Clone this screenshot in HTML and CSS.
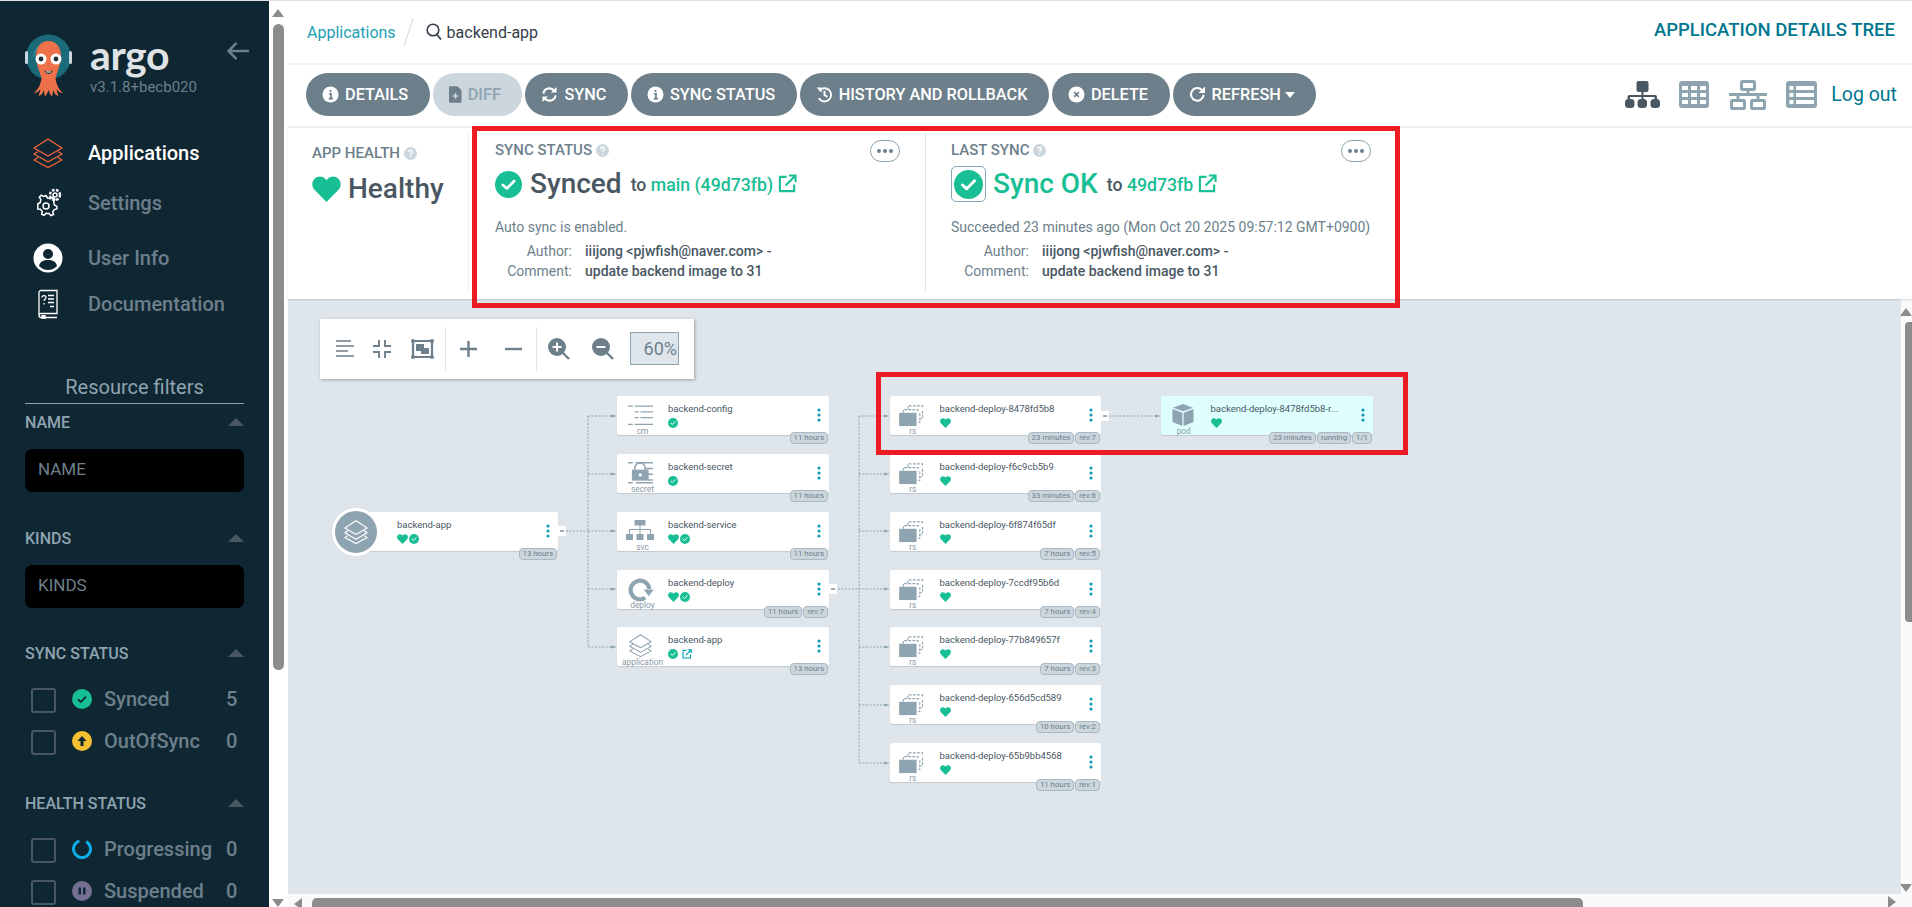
FILE: index.html
```html
<!DOCTYPE html>
<html lang="en">
<head>
<meta charset="utf-8">
<title>backend-app - Argo CD</title>
<link rel="stylesheet" href="styles.css">
</head>
<body>
<svg class="defs" width="0" height="0" aria-hidden="true">
  <defs>
    <symbol id="i-layers" viewBox="0 0 30 30"><g fill="none" stroke="currentColor" stroke-width="1.4" stroke-linejoin="round"><path d="M15 1 29 10 15 18 1 10Z"/><path d="M5 13.5 1 16 15 24 29 16 25 13.5"/><path d="M5 19.5 1 22 15 29.5 29 22 25 19.5"/></g></symbol>
    <symbol id="i-check" viewBox="0 0 20 20"><circle cx="10" cy="10" r="10" fill="#18be94"/><path d="M5.8 10.3 8.8 13 14.2 7.4" fill="none" stroke="#fff" stroke-width="2" stroke-linecap="round" stroke-linejoin="round"/></symbol>
    <symbol id="i-heart" viewBox="0 0 24 22"><path d="M12 22 1.8 11.6C-.6 9-.6 4.9 1.9 2.4 4.4-.1 8.4-.1 10.9 2.4L12 3.5l1.1-1.1c2.5-2.5 6.5-2.5 9 0 2.5 2.5 2.5 6.6.1 9.2Z" fill="#18be94"/></symbol>
    <symbol id="i-ext" viewBox="0 0 20 20"><g fill="none" stroke="currentColor" stroke-width="2.2"><path d="M9 3H2v15h15v-7"/><path d="M8 12 18 2M11.500 1.500H18.500V8.500"/></g></symbol>
    <symbol id="i-info" viewBox="0 0 18 18"><circle cx="9" cy="9" r="8.500" fill="#fff"/><path d="M9 4.200v2.200M7.400 8.200H9.500V13M7.200 13.300h4.400" stroke="#6d7f8b" stroke-width="1.800" fill="none"/></symbol>
    <symbol id="i-q" viewBox="0 0 14 14"><circle cx="7" cy="7" r="7" fill="#ccd6dd"/><path d="M5 5.300C5 3 9 3 9 5.300 9 6.700 7 6.600 7 8.200M7 9.600v1.400" stroke="#fff" stroke-width="1.500" fill="none"/></symbol>
    <symbol id="i-dots" viewBox="0 0 4 14"><circle cx="2" cy="2" r="1.600"/><circle cx="2" cy="7" r="1.600"/><circle cx="2" cy="12" r="1.600"/></symbol>
    <symbol id="i-cm" viewBox="0 0 26 22"><path d="M0 1h5v1.500H0zM7 1h19v1.500H7zM7 7h4v1.500H7zM13 7h13v1.500H13zM7 13h4v1.500H7zM13 13h13v1.500H13zM0 20h5v1.500H0zM7 20h19v1.500H7z" fill="#8fa4b1"/></symbol>
    <symbol id="i-secret" viewBox="0 0 26 24"><path d="M0 1h5v1.500H0zM8 1h18v1.500H8zM17 7h9v1.500H17zM21 13h5v1.500H21zM21 19h5v1.500H21zM0 22h5v1.500H0zM8 22h18v1.500H8z" fill="#8fa4b1"/><path d="M7 9V7.500a5.500 5.500 0 0 1 11 0V9" fill="none" stroke="#8fa4b1" stroke-width="1.600"/><path d="M4 9h17.500v11.500H4z" fill="#8fa4b1"/><circle cx="12.800" cy="14.500" r="1.600" fill="#fff"/></symbol>
    <symbol id="i-svc" viewBox="0 0 28 22"><path d="M8.500 0h11v5.500h-11zM13.500 5.500h1V9h10.500v5h-1v-4H14.500v4h-1v-4H4v4H3V9h10.500zM0 14h7v6H0zM10.500 14h7v6h-7zM21 14h7v6h-7z" fill="#8fa4b1"/></symbol>
    <symbol id="i-deploy" viewBox="0 0 24 24"><path d="M20.500 10.500A9 9 0 1 0 16.500 19" fill="none" stroke="#8fa4b1" stroke-width="4"/><path d="M15 11H24.500L20 17.500Z" fill="#8fa4b1"/></symbol>
    <symbol id="i-rs" viewBox="0 0 28 24"><path d="M9.500 4.500V1h16v3M25.500 6.500V15H23" fill="none" stroke="#8fa4b1" stroke-width="1.200" stroke-dasharray="3 1.500"/><path d="M4.500 8.500V5h16v3M22.500 9v10H21" fill="none" stroke="#8fa4b1" stroke-width="1.200" stroke-dasharray="3 1.500"/><path d="M0 8.500h19V23H0z" fill="#8fa4b1"/></symbol>
    <symbol id="i-pod" viewBox="0 0 24 24"><path d="M12 0 23 4 12 8 1 4Z" fill="#8fa4b1"/><path d="M.500 5.500 11.300 9.500V24L.500 19.500ZM23.500 5.500 12.700 9.500V24L23.500 19.500Z" fill="#8fa4b1"/></symbol>
    <symbol id="i-minus" viewBox="0 0 8 10"><path d="M2 5h4" stroke="#495763" stroke-width="1"/></symbol>
  </defs>
</svg>

<div class="app">
  <aside class="sidebar">
    <div class="brand">
      <svg class="octopus" viewBox="24 32 50 66" aria-hidden="true">
        <circle cx="48.500" cy="57" r="22.500" fill="#1a6a7a"/>
        <path d="M34 57c0-6 3-11 8-13" fill="none" stroke="#5d9aa6" stroke-width=".8"/>
        <rect x="25" y="51" width="3" height="13" rx="1.500" fill="#c9d6dc"/>
        <rect x="69" y="51" width="3" height="13" rx="1.500" fill="#c9d6dc"/>
        <path d="M48.500 41C40 41 36 48 36 56C36 64 40 72 41.500 78C41 84 38 90 34 93C37 93 39 91 40.500 89C40 91 39.500 94 38.500 96C41 95.500 43 93 44 90C44 92 44.500 95 45 96.500C46.500 95 47.500 93 48.500 90C49.500 93 50.500 95 52 96.500C52.500 95 53 92 53 90C54 93 56 95.500 58.500 96C57.500 94 57 91 56.500 89C58 91 60 93 63 93C59 90 56 84 55.500 78C57 72 61 64 61 56C61 48 57 41 48.500 41Z" fill="#ee7249"/>
        <circle cx="41" cy="59" r="5.500" fill="#fff"/><circle cx="56" cy="59" r="5.500" fill="#fff"/>
        <circle cx="41" cy="59" r="2.400" fill="#20323c"/><circle cx="56" cy="59" r="2.400" fill="#20323c"/>
        <path d="M44.500 70.500c2.500 1 5.500 1 8 0-.5 4.500-7.500 4.500-8 0Z" fill="#20323c"/>
        <path d="M46 71.200c1.500.3 3.500.3 5 0l-.4 1.200h-4.200Z" fill="#fff"/>
      </svg>
      <div class="brand-text">
        <div class="wordmark">argo</div>
        <div class="version">v3.1.8+becb020</div>
      </div>
      <svg class="collapse-arrow" viewBox="0 0 24 20" aria-hidden="true"><path d="M23 10H2M10 1.500 1.500 10 10 18.500" fill="none" stroke="currentColor" stroke-width="2.600"/></svg>
    </div>
    <nav class="nav">
      <div class="nav-item nav-active">
        <svg class="nav-icon icon-orange" aria-hidden="true"><use href="#i-layers"/></svg><span>Applications</span>
      </div>
      <div class="nav-item nav-settings">
        <svg class="nav-icon" viewBox="0 0 30 30" aria-hidden="true"><g fill="none" stroke="#fff" stroke-width="1.500"><circle cx="13" cy="18" r="3"/><path d="M13 9.500l1.500 2.500 3 .7 2.500-1.300 2 2-1.300 2.500.7 3 2.500 1.500v2.500l-2.700.7-1.500 2.500.8 2.400-2.600 1-1.900-2-2.900-.2-2 2-2.400-1 .6-2.700-1.800-2.300-2.700-.2V18l2.500-1.500.5-3-1.500-2.300 2-2 2.500 1.200Z" transform="translate(0 -2)"/><circle cx="22" cy="7" r="2"/><circle cx="22" cy="7" r="5" stroke-dasharray="2.500 1.500" stroke-width="2.500"/></g></svg><span>Settings</span>
      </div>
      <div class="nav-item nav-user">
        <svg class="nav-icon" viewBox="0 0 30 30" aria-hidden="true"><circle cx="15" cy="15" r="14.500" fill="#fff"/><circle cx="15" cy="11" r="5" fill="#0f2733"/><path d="M6 23c1-5 5-6 9-6s8 1 9 6c-2.500 2.500-5.500 4-9 4s-6.500-1.500-9-4Z" fill="#0f2733"/></svg><span>User Info</span>
      </div>
      <div class="nav-item nav-doc">
        <svg class="nav-icon" viewBox="0 0 30 30" aria-hidden="true"><g fill="none" stroke="#fff" stroke-width="1.300"><path d="M6 26V3.500A2 2 0 0 1 8 1.500h16v23H8a2 2 0 0 0-2 2 2 2 0 0 0 2 2h16"/><path d="M9 8.500c0-2.500 4-2.500 4 0 0 1.500-2 1.500-2 3.500M11 14v1.500M15 6.500h6M15 10h6M15 13.500h6M17 17.500h4"/><path d="M9 26v3.500l1.500-1 1.500 1V26" fill="#fff"/></g></svg><span>Documentation</span>
      </div>
    </nav>

    <div class="filters-title">Resource filters</div>
    <section class="filter filter-field">
      <div class="filter-head"><span>NAME</span><i class="caret"></i></div>
      <div class="filter-input">NAME</div>
    </section>
    <section class="filter filter-field">
      <div class="filter-head"><span>KINDS</span><i class="caret"></i></div>
      <div class="filter-input">KINDS</div>
    </section>
    <section class="filter filter-checks">
      <div class="filter-head"><span>SYNC STATUS</span><i class="caret"></i></div>
      <div class="check-row"><i class="box"></i><svg class="status-icon" viewBox="0 0 20 20" aria-hidden="true"><circle cx="10" cy="10" r="10" fill="#18be94"/><path d="M6 10.300 8.800 13 14 7.600" fill="none" stroke="#0f2733" stroke-width="1.800"/></svg><span class="check-label">Synced</span><span class="check-count">5</span></div>
      <div class="check-row"><i class="box"></i><svg class="status-icon" viewBox="0 0 20 20" aria-hidden="true"><circle cx="10" cy="10" r="10" fill="#f4c030"/><path d="M10 5 14.500 10H11.500V15H8.500V10H5.500Z" fill="#0f2733"/></svg><span class="check-label">OutOfSync</span><span class="check-count">0</span></div>
    </section>
    <section class="filter filter-checks">
      <div class="filter-head"><span>HEALTH STATUS</span><i class="caret"></i></div>
      <div class="check-row"><i class="box"></i><svg class="status-icon" viewBox="0 0 20 20" aria-hidden="true"><circle cx="10" cy="10" r="8.500" fill="none" stroke="#0dadea" stroke-width="3" stroke-dasharray="46 7.500" transform="rotate(-60 10 10)"/></svg><span class="check-label">Progressing</span><span class="check-count">0</span></div>
      <div class="check-row"><i class="box"></i><svg class="status-icon" viewBox="0 0 20 20" aria-hidden="true"><circle cx="10" cy="10" r="10" fill="#766f94"/><path d="M6.500 6.500h2.500v7H6.500zM11 6.500h2.500v7H11z" fill="#0f2733"/></svg><span class="check-label">Suspended</span><span class="check-count">0</span></div>
    </section>
  </aside>

  <div class="v-scroll">
    <i class="arrow-up"></i>
    <div class="v-thumb"></div>
    <i class="arrow-down"></i>
  </div>

  <main class="main">
    <header class="topbar">
      <div class="crumbs">
        <a class="crumb-link">Applications</a>
        <i class="crumb-slash"></i>
        <svg class="search-icon" viewBox="0 0 16 18" aria-hidden="true"><circle cx="7" cy="7" r="5.800" fill="none" stroke="#363c4a" stroke-width="1.600"/><path d="M10.800 11.500 15 16.500" stroke="#363c4a" stroke-width="1.800"/></svg>
        <span class="crumb-current">backend-app</span>
      </div>
      <div class="page-title">APPLICATION DETAILS TREE</div>
    </header>

    <div class="toolbar">
      <div class="actions">
        <button class="btn"><svg class="btn-icon" aria-hidden="true"><use href="#i-info"/></svg>DETAILS</button>
        <button class="btn btn-disabled"><svg class="btn-icon btn-icon-file" viewBox="0 0 14 18" aria-hidden="true"><path d="M1 0h8l4.500 4.500V17a1 1 0 0 1-1 1H1a1 1 0 0 1-1-1V1a1 1 0 0 1 1-1Z" fill="#6d7f8b"/><path d="M7 7.500v6M4 10.500h6" stroke="#ccd6dd" stroke-width="1.600"/></svg>DIFF</button>
        <button class="btn"><svg class="btn-icon" viewBox="0 0 18 18" aria-hidden="true"><g fill="none" stroke="#fff" stroke-width="2.200"><path d="M2.500 8A6.500 6.500 0 0 1 14 5"/><path d="M15.500 10A6.500 6.500 0 0 1 4 13"/></g><path d="M16.500 1v6h-6ZM1.500 17v-6h6Z" fill="#fff"/></svg>SYNC</button>
        <button class="btn"><svg class="btn-icon" aria-hidden="true"><use href="#i-info"/></svg>SYNC STATUS</button>
        <button class="btn"><svg class="btn-icon" viewBox="0 0 18 18" aria-hidden="true"><g fill="none" stroke="#fff" stroke-width="2"><path d="M3.500 5A7 7 0 1 1 3 13"/><path d="M9 5v4.500l3 2"/></g><path d="M.500 1.500h5.500v5.500Z" fill="#fff"/></svg>HISTORY AND ROLLBACK</button>
        <button class="btn"><svg class="btn-icon" viewBox="0 0 18 18" aria-hidden="true"><circle cx="9" cy="9" r="8.500" fill="#fff"/><path d="M6.500 6.500l5 5M11.500 6.500l-5 5" stroke="#6d7f8b" stroke-width="1.600"/></svg>DELETE</button>
        <button class="btn"><svg class="btn-icon" viewBox="0 0 18 18" aria-hidden="true"><path d="M15.500 9.500A6.700 6.700 0 1 1 13.500 4" fill="none" stroke="#fff" stroke-width="2.200"/><path d="M17 .500v7h-7Z" fill="#fff"/></svg>REFRESH<i class="btn-caret"></i></button>
      </div>
      <div class="view-tools">
        <svg class="view-icon view-tree" viewBox="0 0 35 27" aria-hidden="true"><path d="M13.500 0h8a2 2 0 0 1 2 2v7a2 2 0 0 1-2 2h-3v3h11.500a2 2 0 0 1 2 2v2.500h-2.500V16H18.500v2.500h-2V16H5v2.500H2.500V16a2 2 0 0 1 2-2h12v-3h-3a2 2 0 0 1-2-2V2a2 2 0 0 1 2-2Z" fill="#495763"/><rect x="0" y="18" width="9.500" height="9" rx="3.500" fill="#495763"/><rect x="12.500" y="18" width="9.500" height="9" rx="3.500" fill="#495763"/><rect x="25.500" y="18" width="9.500" height="9" rx="3.500" fill="#495763"/></svg>
        <svg class="view-icon view-grid" viewBox="0 0 30 27" aria-hidden="true"><rect width="30" height="27" rx="3" fill="#8fa4b1"/><path d="M3 5h6v4H3zM12 5h6v4H12zM21 5h6v4H21zM3 12h6v4H3zM12 12h6v4H12zM21 12h6v4H21zM3 19h6v4H3zM12 19h6v4H12zM21 19h6v4H21z" fill="#fff"/></svg>
        <svg class="view-icon view-net" viewBox="0 0 38 30" aria-hidden="true"><g fill="none" stroke="#8fa4b1" stroke-width="3"><rect x="12.500" y="1.500" width="13" height="8" rx="1"/><rect x="2.500" y="20.500" width="13" height="8" rx="1"/><rect x="22.500" y="20.500" width="13" height="8" rx="1"/><path d="M0 14.500h38M19 10v4.500M9 15v5M29 15v5"/></g></svg>
        <svg class="view-icon view-list" viewBox="0 0 31 27" aria-hidden="true"><rect width="31" height="27" rx="3" fill="#8fa4b1"/><path d="M3.500 5h4v4h-4zM10 5h18v4H10zM3.500 12h4v4h-4zM10 12h18v4H10zM3.500 19h4v4h-4zM10 19h18v4H10z" fill="#fff"/></svg>
        <a class="logout">Log out</a>
      </div>
    </div>

    <section class="status-panel">
      <div class="status-item status-health">
        <div class="status-label">APP HEALTH<svg class="q" aria-hidden="true"><use href="#i-q"/></svg></div>
        <div class="status-value"><svg class="big-heart" aria-hidden="true"><use href="#i-heart"/></svg><span class="value-text">Healthy</span></div>
      </div>
      <div class="status-item status-sync">
        <div class="status-label">SYNC STATUS<svg class="q" aria-hidden="true"><use href="#i-q"/></svg><span class="more"><i></i><i></i><i></i></span></div>
        <div class="status-value"><svg class="big-check" aria-hidden="true"><use href="#i-check"/></svg><span class="value-text">Synced</span><span class="value-to">to <a class="green">main (49d73fb)</a></span><svg class="ext" aria-hidden="true"><use href="#i-ext"/></svg></div>
        <div class="status-line">Auto sync is enabled.</div>
        <dl class="meta">
          <dt>Author:</dt><dd>iiijong &lt;pjwfish@naver.com&gt; -</dd>
          <dt>Comment:</dt><dd>update backend image to 31</dd>
        </dl>
      </div>
      <div class="status-item status-last">
        <div class="status-label">LAST SYNC<svg class="q" aria-hidden="true"><use href="#i-q"/></svg><span class="more"><i></i><i></i><i></i></span></div>
        <div class="status-value"><span class="check-frame"><svg class="big-check" aria-hidden="true"><use href="#i-check"/></svg></span><span class="value-text green">Sync OK</span><span class="value-to">to <a class="green">49d73fb</a></span><svg class="ext" aria-hidden="true"><use href="#i-ext"/></svg></div>
        <div class="status-line">Succeeded 23 minutes ago (Mon Oct 20 2025 09:57:12 GMT+0900)</div>
        <dl class="meta">
          <dt>Author:</dt><dd>iiijong &lt;pjwfish@naver.com&gt; -</dd>
          <dt>Comment:</dt><dd>update backend image to 31</dd>
        </dl>
      </div>
    </section>

    <div class="graph-row">
      <section class="graph">
        <div class="graph-tools">
          <svg class="gt gt-align" viewBox="0 0 18 18" aria-hidden="true"><path d="M0 1h15M0 6h18M0 11h12M0 16h18" stroke="#6d7f8b" stroke-width="1.700"/></svg>
          <svg class="gt gt-compress" viewBox="0 0 18 18" aria-hidden="true"><path d="M6 0v6H0M12 0v6h6M6 18v-6H0M12 18v-6h6" fill="none" stroke="#6d7f8b" stroke-width="1.900"/></svg>
          <svg class="gt gt-fit" viewBox="0 0 23 20" aria-hidden="true"><path d="M2 2h19v16H2Z" fill="none" stroke="#6d7f8b" stroke-width="2.200"/><rect x="5" y="5" width="8" height="7" fill="#6d7f8b"/><rect x="10" y="9" width="8" height="6" rx="1" fill="#6d7f8b"/><circle cx="2" cy="2" r="2" fill="#6d7f8b"/><circle cx="21" cy="2" r="2" fill="#6d7f8b"/><circle cx="2" cy="18" r="2" fill="#6d7f8b"/><circle cx="21" cy="18" r="2" fill="#6d7f8b"/></svg>
          <i class="gt-sep"></i>
          <svg class="gt gt-plus" viewBox="0 0 18 18" aria-hidden="true"><path d="M0 9h17M8.500 1v16" stroke="#6d7f8b" stroke-width="2.400"/></svg>
          <svg class="gt gt-minus" viewBox="0 0 18 18" aria-hidden="true"><path d="M0 9h17" stroke="#6d7f8b" stroke-width="2.400"/></svg>
          <i class="gt-sep"></i>
          <svg class="gt gt-zoom" viewBox="0 0 22 22" aria-hidden="true"><circle cx="9" cy="9" r="9" fill="#6d7f8b"/><path d="M14.500 14.500 21 21" stroke="#6d7f8b" stroke-width="2.400"/><path d="M4.500 9h9M9 4.500v9" stroke="#fff" stroke-width="2"/></svg>
          <svg class="gt gt-zoom" viewBox="0 0 22 22" aria-hidden="true"><circle cx="9" cy="9" r="9" fill="#6d7f8b"/><path d="M14.500 14.500 21 21" stroke="#6d7f8b" stroke-width="2.400"/><path d="M4.500 9h9" stroke="#fff" stroke-width="2"/></svg>
          <div class="zoom-input">60%</div>
        </div>

        <svg class="edges" width="1613" height="595" viewBox="288 299 1613 595" aria-hidden="true">
          <g fill="none" stroke="#8fa4b1" stroke-width="1" stroke-dasharray="2 1.500">
            <path d="M566 531H588M588 416V647M588 416H614M588 474H614M588 531H614M588 589H614M588 647H614"/>
            <path d="M838 589H859M859 416V763M859 416H887M859 474H887M859 531H887M859 589H887M859 647H887M859 705H887M859 763H887"/>
            <path d="M1109 416H1158"/>
          </g>
          <path d="M611 414.500 617 416 611 417.500ZM611 472.500 617 474 611 475.500ZM611 529.500 617 531 611 532.500ZM611 587.500 617 589 611 590.500ZM611 645.500 617 647 611 648.500ZM884 414.500 890 416 884 417.500ZM884 472.500 890 474 884 475.500ZM884 529.500 890 531 884 532.500ZM884 587.500 890 589 884 590.500ZM884 645.500 890 647 884 648.500ZM884 703.500 890 705 884 706.500ZM884 761.500 890 763 884 764.500ZM1155 414.500 1161 416 1155 417.500Z" fill="#8fa4b1"/>
        </svg>

        <div class="app-circle" style="left:44px;top:209px"><svg viewBox="0 0 30 30" aria-hidden="true"><use href="#i-layers"/></svg></div>
        <article class="node node-app" style="left:68px;top:213px">
          <div class="node-main"><div class="node-name">backend-app</div><div class="node-status"><svg class="h" aria-hidden="true"><use href="#i-heart"/></svg><svg aria-hidden="true"><use href="#i-check"/></svg></div></div>
          <svg class="node-dots" aria-hidden="true"><use href="#i-dots"/></svg>
          <div class="tags"><span>13 hours</span></div>
        </article>
        <span class="collapse" style="left:270px;top:227px"><svg aria-hidden="true"><use href="#i-minus"/></svg></span>

        <article class="node" style="left:329px;top:97px">
          <div class="node-kind"><svg class="k-cm" aria-hidden="true"><use href="#i-cm"/></svg><span>cm</span></div>
          <div class="node-main"><div class="node-name">backend-config</div><div class="node-status"><svg aria-hidden="true"><use href="#i-check"/></svg></div></div>
          <svg class="node-dots" aria-hidden="true"><use href="#i-dots"/></svg>
          <div class="tags"><span>11 hours</span></div>
        </article>
        <article class="node" style="left:329px;top:155px">
          <div class="node-kind"><svg class="k-secret" aria-hidden="true"><use href="#i-secret"/></svg><span>secret</span></div>
          <div class="node-main"><div class="node-name">backend-secret</div><div class="node-status"><svg aria-hidden="true"><use href="#i-check"/></svg></div></div>
          <svg class="node-dots" aria-hidden="true"><use href="#i-dots"/></svg>
          <div class="tags"><span>11 hours</span></div>
        </article>
        <article class="node" style="left:329px;top:213px">
          <div class="node-kind"><svg class="k-svc" aria-hidden="true"><use href="#i-svc"/></svg><span>svc</span></div>
          <div class="node-main"><div class="node-name">backend-service</div><div class="node-status"><svg class="h" aria-hidden="true"><use href="#i-heart"/></svg><svg aria-hidden="true"><use href="#i-check"/></svg></div></div>
          <svg class="node-dots" aria-hidden="true"><use href="#i-dots"/></svg>
          <div class="tags"><span>11 hours</span></div>
        </article>
        <article class="node" style="left:329px;top:271px">
          <div class="node-kind"><svg class="k-deploy" aria-hidden="true"><use href="#i-deploy"/></svg><span>deploy</span></div>
          <div class="node-main"><div class="node-name">backend-deploy</div><div class="node-status"><svg class="h" aria-hidden="true"><use href="#i-heart"/></svg><svg aria-hidden="true"><use href="#i-check"/></svg></div></div>
          <svg class="node-dots" aria-hidden="true"><use href="#i-dots"/></svg>
          <div class="tags"><span>11 hours</span><span>rev:7</span></div>
        </article>
        <span class="collapse" style="left:541px;top:285px"><svg aria-hidden="true"><use href="#i-minus"/></svg></span>
        <article class="node" style="left:329px;top:328px">
          <div class="node-kind"><svg class="k-app" aria-hidden="true"><use href="#i-layers"/></svg><span>application</span></div>
          <div class="node-main"><div class="node-name">backend-app</div><div class="node-status"><svg aria-hidden="true"><use href="#i-check"/></svg><svg class="node-ext" aria-hidden="true"><use href="#i-ext"/></svg></div></div>
          <svg class="node-dots" aria-hidden="true"><use href="#i-dots"/></svg>
          <div class="tags"><span>13 hours</span></div>
        </article>

        <article class="node node-rs" style="left:602px;top:97px">
          <div class="node-kind"><svg class="k-rs" aria-hidden="true"><use href="#i-rs"/></svg><span>rs</span></div>
          <div class="node-main"><div class="node-name">backend-deploy-8478fd5b8</div><div class="node-status"><svg class="h" aria-hidden="true"><use href="#i-heart"/></svg></div></div>
          <svg class="node-dots" aria-hidden="true"><use href="#i-dots"/></svg>
          <div class="tags"><span>23 minutes</span><span>rev:7</span></div>
        </article>
        <span class="collapse" style="left:813px;top:112px"><svg aria-hidden="true"><use href="#i-minus"/></svg></span>
        <article class="node node-rs" style="left:602px;top:155px">
          <div class="node-kind"><svg class="k-rs" aria-hidden="true"><use href="#i-rs"/></svg><span>rs</span></div>
          <div class="node-main"><div class="node-name">backend-deploy-f6c9cb5b9</div><div class="node-status"><svg class="h" aria-hidden="true"><use href="#i-heart"/></svg></div></div>
          <svg class="node-dots" aria-hidden="true"><use href="#i-dots"/></svg>
          <div class="tags"><span>33 minutes</span><span>rev:6</span></div>
        </article>
        <article class="node node-rs" style="left:602px;top:213px">
          <div class="node-kind"><svg class="k-rs" aria-hidden="true"><use href="#i-rs"/></svg><span>rs</span></div>
          <div class="node-main"><div class="node-name">backend-deploy-6f874f65df</div><div class="node-status"><svg class="h" aria-hidden="true"><use href="#i-heart"/></svg></div></div>
          <svg class="node-dots" aria-hidden="true"><use href="#i-dots"/></svg>
          <div class="tags"><span>7 hours</span><span>rev:5</span></div>
        </article>
        <article class="node node-rs" style="left:602px;top:271px">
          <div class="node-kind"><svg class="k-rs" aria-hidden="true"><use href="#i-rs"/></svg><span>rs</span></div>
          <div class="node-main"><div class="node-name">backend-deploy-7ccdf95b6d</div><div class="node-status"><svg class="h" aria-hidden="true"><use href="#i-heart"/></svg></div></div>
          <svg class="node-dots" aria-hidden="true"><use href="#i-dots"/></svg>
          <div class="tags"><span>7 hours</span><span>rev:4</span></div>
        </article>
        <article class="node node-rs" style="left:602px;top:328px">
          <div class="node-kind"><svg class="k-rs" aria-hidden="true"><use href="#i-rs"/></svg><span>rs</span></div>
          <div class="node-main"><div class="node-name">backend-deploy-77b849657f</div><div class="node-status"><svg class="h" aria-hidden="true"><use href="#i-heart"/></svg></div></div>
          <svg class="node-dots" aria-hidden="true"><use href="#i-dots"/></svg>
          <div class="tags"><span>7 hours</span><span>rev:3</span></div>
        </article>
        <article class="node node-rs" style="left:602px;top:386px">
          <div class="node-kind"><svg class="k-rs" aria-hidden="true"><use href="#i-rs"/></svg><span>rs</span></div>
          <div class="node-main"><div class="node-name">backend-deploy-656d5cd589</div><div class="node-status"><svg class="h" aria-hidden="true"><use href="#i-heart"/></svg></div></div>
          <svg class="node-dots" aria-hidden="true"><use href="#i-dots"/></svg>
          <div class="tags"><span>10 hours</span><span>rev:2</span></div>
        </article>
        <article class="node node-rs" style="left:602px;top:444px">
          <div class="node-kind"><svg class="k-rs" aria-hidden="true"><use href="#i-rs"/></svg><span>rs</span></div>
          <div class="node-main"><div class="node-name">backend-deploy-65b9bb4568</div><div class="node-status"><svg class="h" aria-hidden="true"><use href="#i-heart"/></svg></div></div>
          <svg class="node-dots" aria-hidden="true"><use href="#i-dots"/></svg>
          <div class="tags"><span>11 hours</span><span>rev:1</span></div>
        </article>

        <article class="node node-rs node-pod" style="left:873px;top:97px">
          <div class="node-kind"><svg class="k-pod" aria-hidden="true"><use href="#i-pod"/></svg><span>pod</span></div>
          <div class="node-main"><div class="node-name">backend-deploy-8478fd5b8-r...</div><div class="node-status"><svg class="h" aria-hidden="true"><use href="#i-heart"/></svg></div></div>
          <svg class="node-dots" aria-hidden="true"><use href="#i-dots"/></svg>
          <div class="tags"><span>23 minutes</span><span>running</span><span>1/1</span></div>
        </article>
      </section>
      <div class="r-scroll"><i class="arrow-up"></i><div class="r-thumb"></div><i class="arrow-down"></i></div>
    </div>

    <div class="h-scroll"><i class="arrow-left"></i><div class="h-thumb"></div><i class="arrow-right"></i></div>
  </main>
</div>

<div class="annot annot-status"></div>
<div class="annot annot-nodes"></div>
</body>
</html>
```

FILE: styles.css
```css
* { box-sizing: border-box; }
html, body { margin: 0; height: 100%; overflow: hidden; }
body { font-family: Roboto, "Liberation Sans", sans-serif; color: #495763; background: #fff; border-top: 1px solid #e0e0e0; }
.defs { position: absolute; }
.app { display: flex; height: 906px; }

/* sidebar */
.sidebar { width: 269px; flex: none; background: #0f2733; overflow: hidden; color: #6d7f8b; }
.brand { display: flex; height: 110px; padding: 31px 19px 0 24px; align-items: flex-start; }
.octopus { width: 50px; height: 66px; flex: none; }
.brand-text { margin-left: 16px; width: 114px; flex: none; }
.wordmark { font-family: Lato, sans-serif; font-weight: 700; font-size: 41px; line-height: 36px; height: 42px; color: #dfe3e5; margin-top: 5px; letter-spacing: -.4px; }
.version { font-size: 15px; line-height: 18px; color: #6d7f8b; margin-top: -1px; white-space: nowrap; }
.collapse-arrow { width: 23px; height: 20px; color: #6d7f8b; margin-left: 23px; margin-top: 9px; flex: none; }
.nav { display: block; }
.nav-item { display: flex; align-items: center; font-size: 20px; line-height: 30px; font-weight: 500; }
.nav-icon { width: 30px; height: 30px; margin: 0 25px 0 33px; flex: none; }
.nav-active { color: #fff; margin-top: 27px; }
.icon-orange { color: #f4623a; }
.nav-settings { margin-top: 20px; }
.nav-user { margin-top: 25px; }
.nav-doc { margin-top: 16px; }
.filters-title { margin: 56px 25px 0; height: 29px; border-bottom: 1px solid #8fa4b1; color: #8fa4b1; text-align: center; font-size: 20px; line-height: 24px; }
.filter { padding: 0 25px; }
.filter-head { display: flex; justify-content: space-between; align-items: center; font-size: 16px; font-weight: 500; color: #8fa4b1; height: 20px; }
.caret { width: 0; height: 0; border: 8px solid transparent; border-top: 0; border-bottom: 8px solid #495763; }
.filter-field { margin-top: 8px; height: 116px; }
.filter-field + .filter-field { margin-top: 0; height: 115px; }
.filter-input { margin-top: 17px; height: 43px; background: #000; border-radius: 7px; padding-left: 13px; font-size: 17px; line-height: 41px; color: #6d7f8b; }
.filter-checks { margin-top: 0; height: 150px; padding-right: 0; }
.filter-checks .filter-head { margin-right: 25px; }
.check-row { display: flex; align-items: center; height: 42px; font-size: 20px; font-weight: 500; color: #6d7f8b; }
.filter-head + .check-row { margin-top: 15px; }
.box { width: 25px; height: 25px; border: 2px solid #495763; border-radius: 3px; margin: 3px 16px 0 6px; flex: none; }
.status-icon { width: 20px; height: 20px; flex: none; margin-right: 12px; }
.check-label { width: 122px; white-space: nowrap; }

/* scrollbars */
.v-scroll { width: 19px; flex: none; position: relative; background: #fff; }
.v-thumb { position: absolute; left: 4px; top: 23px; width: 11px; height: 646px; background: #8c8c8c; border-radius: 6px; }
.arrow-up, .arrow-down, .arrow-left, .arrow-right { position: absolute; width: 0; height: 0; border: 6px solid transparent; }
.arrow-up { border-top: 0; border-bottom: 8px solid #8c8c8c; }
.arrow-down { border-bottom: 0; border-top: 8px solid #8c8c8c; }
.arrow-left { border-left: 0; border-right: 8px solid #8c8c8c; }
.arrow-right { border-right: 0; border-left: 8px solid #8c8c8c; }
.v-scroll .arrow-up { left: 3px; top: 8px; }
.v-scroll .arrow-down { left: 3px; bottom: 0; }

/* main */
.main { flex: 1; min-width: 0; display: flex; flex-direction: column; position: relative; }
.topbar { height: 64px; border-bottom: 2px solid #eef1f4; display: flex; justify-content: space-between; align-items: flex-start; padding: 0 17px 0 19px; flex: none; }
.crumbs { display: flex; align-items: center; height: 62px; }
.crumb-link { font-size: 16px; color: #1a9fb8; }
.crumb-slash { width: 1px; height: 29px; background: #ccd6dd; transform: rotate(18deg); margin: 0 17px 0 12px; }
.search-icon { width: 16px; height: 18px; margin: 0 5px 0 0; }
.crumb-current { font-size: 16px; color: #363c4a; }
.page-title { font-size: 18.500px; font-weight: 500; color: #00778f; line-height: 58px; }
.toolbar { height: 63px; border-bottom: 2px solid #eef1f4; display: flex; justify-content: space-between; align-items: center; padding: 0 15px 2px 18px; flex: none; }
.actions { display: flex; gap: 3px; }
.btn { height: 43px; border: 0; border-radius: 21.500px; background: #6d7f8b; color: #fff; font: 500 16.300px Roboto, sans-serif; display: flex; align-items: center; padding: 0 21.500px 0 16px; white-space: nowrap; }
.btn-icon { width: 17px; height: 17px; margin-right: 6px; flex: none; }
.btn-icon-file { width: 13px; height: 17px; }
.btn-disabled { background: #ccd6dd; color: #8fa4b1; }
.btn-caret { width: 0; height: 0; border: 5px solid transparent; border-bottom: 0; border-top: 6px solid #fff; margin-left: 4px; }
.view-tools { display: flex; align-items: center; }
.view-icon { height: 27px; flex: none; }
.view-tree { width: 35px; margin-right: 19px; }
.view-grid { width: 30px; margin-right: 20px; }
.view-net { width: 38px; height: 30px; margin-right: 19px; }
.view-list { width: 31px; margin-right: 14px; }
.logout { font-size: 19.500px; color: #00778f; }

/* status panel */
.status-panel { height: 171px; flex: none; display: flex; padding-top: 5px; box-shadow: 0 1px 2px rgba(0,0,0,.15); position: relative; z-index: 1; }
.status-item { padding: 0; height: 159px; position: relative; }
.status-health { width: 181px; padding-left: 24px; border-right: 1px solid #eef1f4; }
.status-sync { width: 457px; padding-left: 26px; border-right: 1px solid #e0e6ea; }
.status-last { padding-left: 25px; width: 450px; }
.status-label { font-size: 15px; font-weight: 500; color: #6d7f8b; line-height: 18px; margin-top: 8px; display: flex; align-items: center; }
.status-health .status-label { margin-top: 11px; }
.q { width: 13px; height: 13px; margin-left: 4px; }
.more { position: absolute; right: 25px; top: 7px; width: 30px; height: 22px; border: 1px solid #8fa4b1; border-radius: 12px; display: flex; align-items: center; justify-content: center; gap: 2px; background: #fff; }
.status-last .more { right: auto; left: 415px; }
.more i { width: 4px; height: 4px; background: #6d7f8b; border-radius: 50%; }
.status-value { display: flex; align-items: center; height: 38px; margin-top: 6px; font-size: 17px; color: #495763; }
.status-health .status-value { margin-top: 8px; }
.big-heart { width: 29px; height: 26px; margin-right: 7px; }
.big-check { width: 27px; height: 27px; margin-right: 8px; }
.value-text { font-size: 28px; font-weight: 500; line-height: 38px; }
.value-to { margin-left: 9px; font-size: 17.700px; font-weight: 500; margin-top: 2px; white-space: nowrap; }
.green { color: #18be94; }
.ext { width: 19px; height: 19px; color: #18be94; margin-left: 5px; margin-top: -2px; }
.check-frame { width: 35px; height: 36px; border: 1.500px solid #8fa4b1; border-radius: 5px; display: flex; align-items: center; justify-content: center; margin-right: 7px; flex: none; }
.check-frame .big-check { margin: 0; width: 29px; height: 29px; }
.status-line { font-size: 14px; line-height: 20px; color: #6d7f8b; margin-top: 14px; white-space: nowrap; }
.meta { display: grid; grid-template-columns: 77px 1fr; column-gap: 13px; margin: 4px 0 0; font-size: 14px; line-height: 20px; }
.status-last .meta { grid-template-columns: 78px 1fr; }
.meta dt { text-align: right; color: #6d7f8b; }
.meta dd { margin: 0; font-weight: 500; color: #495763; white-space: nowrap; }

/* graph */
.graph-row { display: flex; height: 595px; flex: none; }
.graph { width: 1613px; flex: none; background: #dee6eb; position: relative; overflow: hidden; }
.graph-tools { position: absolute; left: 32px; top: 20px; width: 374px; height: 60px; background: #fff; box-shadow: 1px 1px 3px rgba(0,0,0,.3); display: flex; align-items: center; padding-left: 16px; }
.gt { flex: none; }
.gt-align { width: 18px; height: 18px; margin-right: 19px; }
.gt-compress { width: 18px; height: 18px; margin-right: 20px; }
.gt-fit { width: 23px; height: 20px; margin-right: 11px; }
.gt-sep { width: 1px; height: 44px; background: #dee6eb; flex: none; }
.gt-sep + .gt-plus { margin-left: 14px; margin-right: 27px; width: 18px; height: 18px; }
.gt-minus { width: 18px; height: 18px; margin-right: 13px; }
.gt-sep + .gt-zoom { margin-left: 11px; margin-right: 22px; }
.gt-zoom { width: 22px; height: 22px; }
.zoom-input { margin: 0 0 2px 16px; width: 49px; height: 33px; border: 1px solid #8fa4b1; background: #dee6eb; font-size: 18px; line-height: 31px; text-align: right; padding-right: 1px; color: #6d7f8b; }
.edges { position: absolute; left: 0; top: 0; }
.node { position: absolute; width: 212px; height: 39px; background: #fff; border-radius: 2px; box-shadow: 0 1px 1px rgba(0,0,0,.12); display: flex; }
.node-rs { width: 211px; }
.node-app { width: 202px; padding-left: 41px; }
.node-pod { background: #dfffff; width: 212px; }
.node-kind { width: 51px; flex: none; position: relative; text-align: center; }
.node-rs .node-kind { width: 49.500px; }
.node-rs .node-kind span { padding-right: 4px; }
.node-kind svg { position: absolute; }
.node-kind span { position: absolute; left: 0; right: 0; top: 30px; font-size: 8.400px; line-height: 10px; color: #8a9aa6; white-space: nowrap; }
.k-cm { left: 11px; top: 8px; width: 25px; height: 22px; }
.k-secret { left: 11px; top: 7px; width: 25px; height: 23px; }
.k-svc { left: 9px; top: 8px; width: 28px; height: 22px; }
.k-deploy { left: 11px; top: 8px; width: 25px; height: 25px; }
.k-app { left: 12px; top: 7px; width: 23px; height: 23px; color: #8fa4b1; }
.k-rs { left: 8px; top: 9px; width: 28px; height: 22px; }
.k-pod { left: 11px; top: 8px; width: 22px; height: 22px; }
.node-main { padding-top: 7px; min-width: 0; }
.node-name { font-size: 9.500px; line-height: 12px; color: #495763; white-space: nowrap; }
.node-status { display: flex; gap: 1px; margin-top: 3px; }
.node-status svg { width: 10px; height: 10px; }
.node-status .h { width: 11px; }
.node-status .node-ext { color: #00a2b3; margin-left: 3px; }
.node-dots { position: absolute; right: 8px; top: 12px; width: 4px; height: 14px; fill: #0e9cb5; }
.tags { position: absolute; right: 1px; bottom: -9px; display: flex; gap: 1px; }
.tags span { height: 12px; padding: 0 3px; background: #ccd6dd; border: 1px solid #a9b8c2; border-radius: 4px; font-size: 7.800px; line-height: 10px; color: #6d7f8b; white-space: nowrap; }
.app-circle { position: absolute; width: 48px; height: 48px; border-radius: 50%; background: #8fa4b1; border: 3px solid #fff; color: #fff; display: flex; align-items: center; justify-content: center; z-index: 1; }
.app-circle svg { width: 24px; height: 24px; }
.collapse { position: absolute; width: 8px; height: 10px; background: #fff; display: block; }
.collapse svg { display: block; width: 8px; height: 10px; }

.r-scroll { flex: 1; position: relative; background: #fafafa; }
.r-scroll .arrow-up { left: -1px; top: 9px; }
.r-scroll .arrow-down { left: -1px; bottom: 2px; }
.r-thumb { position: absolute; left: 4px; right: 0; top: 23px; height: 300px; background: #8c8c8c; border-radius: 4px 0 0 4px; }
.h-scroll { height: 13px; background: #fafafa; position: relative; flex: none; }
.h-scroll .arrow-left { left: 6px; top: 4px; }
.h-scroll .arrow-right { right: 16px; top: 2px; }
.h-thumb { position: absolute; left: 24px; width: 1271px; top: 4px; height: 9px; background: #8c8c8c; border-radius: 5px 5px 0 0; }

/* annotation rectangles over the shot */
.annot { position: absolute; border: 5px solid #ed1c24; pointer-events: none; }
.annot-status { left: 472px; top: 126px; width: 928px; height: 182px; }
.annot-nodes { left: 876px; top: 372px; width: 532px; height: 83px; }
```
